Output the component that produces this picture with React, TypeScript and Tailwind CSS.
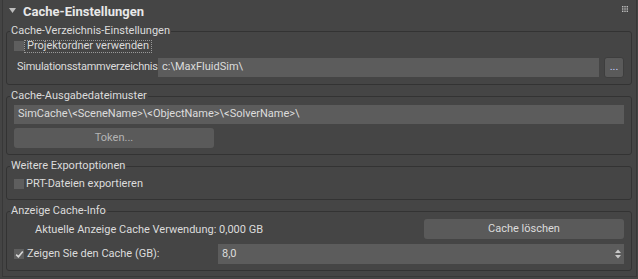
import React from "react";

function Check({ checked = false }: { checked?: boolean }) {
  return (
    <div className="w-[10px] h-[10px] bg-[#5e5e5e] shrink-0 flex items-center justify-center">
      {checked && (
        <svg width="9" height="9" viewBox="0 0 9 9">
          <path d="M1.2 4.6 L3.4 6.8 L7.8 1.6" stroke="#d8d8d8" strokeWidth="1.6" fill="none" />
        </svg>
      )}
    </div>
  );
}

function Group({ title, children, cls }: { title: string; children: React.ReactNode; cls: string }) {
  return (
    <fieldset className={`ml-[3px] mr-[4px] border border-[#333333] rounded-[3px] px-[7px] ${cls}`}>
      <legend className="ml-[-4px] px-[1px] leading-[16px] h-[16px]">{title}</legend>
      {children}
    </fieldset>
  );
}

export default function App() {
  return (
    <div className="w-[638px] h-[279px] bg-[#444444] text-[#dcdcdc] text-[11px] font-['Roboto',sans-serif] overflow-hidden">
      <div className="ml-[2px] w-[635px] h-[277px] border-x border-b border-[#383838] bg-[#454545]">
        <div className="h-[23px] flex items-center pl-[6px] pr-[7px]">
          <svg width="7" height="6" viewBox="0 0 7 6" className="mb-[2px]">
            <path d="M0 0 L7 0 L3.5 5 Z" fill="#bdbdbd" />
          </svg>
          <span className="ml-[7px] font-bold text-[13px] text-[#e8e8e8]">Cache-Einstellungen</span>
          <div className="flex-1" />
          <svg width="7" height="6" viewBox="0 0 7 6" className="mt-[-5px]">
            {[0, 2.3, 4.6].map((y) =>
              [0, 2.3, 4.6].map((x) => <rect key={`${x}-${y}`} x={x} y={y} width="1.4" height="1.4" fill="#bdbdbd" />)
            )}
          </svg>
        </div>

        <Group title="Cache-Verzeichnis-Einstellungen" cls="pb-[6px]">
          <div className="mt-[1px] h-[12px] flex items-center">
            <Check />
            <span className="h-[13px] px-[2px] border border-dotted border-[#9a9a9a] flex items-center leading-[12px]">
              Projektordner verwenden
            </span>
          </div>
          <div className="mt-[5px] h-[21px] flex items-center">
            <span className="w-[144px] pl-[3px] shrink-0 whitespace-nowrap tracking-[-0.25px]">Simulationsstammverzeichnis</span>
            <div className="flex-1 h-[19px] bg-[#5c5c5c] flex items-center pl-[4px]">c:\MaxFluidSim\</div>
            <div className="ml-[5px] w-[20px] h-[21px] bg-[#5a5a5a] border border-[#3e3e3e] rounded-[3px] flex items-center justify-center text-[#c8d0ff] leading-none pb-[2px]">
              ...
            </div>
          </div>
        </Group>

        <Group title="Cache-Ausgabedateimuster" cls="mt-[3px] pb-[6px]">
          <div className="mt-[1px] h-[19px] bg-[#5c5c5c] flex items-center pl-[4px]">
            SimCache\&lt;SceneName&gt;\&lt;ObjectName&gt;\&lt;SolverName&gt;\
          </div>
          <div className="mt-[4px] w-[200px] h-[20px] bg-[#5a5a5a] rounded-[3px] flex items-center justify-center text-[#b4b4b4]">
            Token...
          </div>
        </Group>

        <Group title="Weitere Exportoptionen" cls="mt-[3px] pb-[7px]">
          <div className="mt-[2px] h-[16px] flex items-center">
            <Check />
            <span className="ml-[2px]">PRT-Dateien exportieren</span>
          </div>
        </Group>

        <Group title="Anzeige Cache-Info" cls="mt-[3px] pb-[6px]">
          <div className="h-[20px] flex items-center justify-between">
            <span className="pl-[21px] pt-[2px]">Aktuelle Anzeige Cache Verwendung: 0,000 GB</span>
            <div className="w-[200px] h-[20px] bg-[#5a5a5a] rounded-[3px] flex items-center justify-center">
              Cache löschen
            </div>
          </div>
          <div className="mt-[5px] h-[20px] flex items-center">
            <Check checked />
            <span className="ml-[3px] w-[191px]">Zeigen Sie den Cache (GB):</span>
            <div className="flex-1 h-[20px] bg-[#5c5c5c] flex items-center pl-[4px] pr-[3px]">
              <span className="flex-1">8,0</span>
              <svg width="6" height="10" viewBox="0 0 6 10">
                <path d="M0 4 L3 0.5 L6 4 Z" fill="#c8c8c8" />
                <path d="M0 6 L3 9.5 L6 6 Z" fill="#c8c8c8" />
              </svg>
            </div>
          </div>
        </Group>
      </div>
    </div>
  );
}
